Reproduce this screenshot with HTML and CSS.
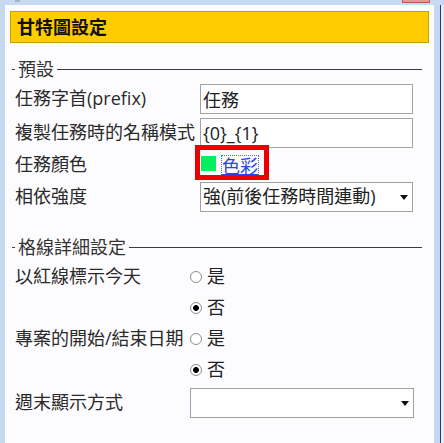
FILE: index.html
```html
<!DOCTYPE html>
<html lang="zh-Hant">
<head>
<meta charset="utf-8">
<title>甘特圖設定</title>
<link rel="stylesheet" href="styles.css">
</head>
<body>
<div class="topstrip">
  <span class="grip"></span>
  <span class="closebtn"></span>
</div>
<div class="main">
  <div class="panel">
    <div class="header">甘特圖設定</div>

    <div class="legend">預設</div>
    <div class="rows">
      <div class="row r1">
        <label class="lbl">任務字首(prefix)</label>
        <input class="txt" type="text" value="任務">
      </div>
      <div class="row">
        <label class="lbl">複製任務時的名稱模式</label>
        <input class="txt" type="text" value="{0}_{1}">
      </div>
      <div class="row r3">
        <label class="lbl">任務顏色</label>
        <div class="colorcell">
          <span class="swatch"></span>
          <a class="colorlink" href="#">色彩</a>
        </div>
      </div>
      <div class="row">
        <label class="lbl">相依強度</label>
        <select class="sel sel1">
          <option>強(前後任務時間連動)</option>
        </select>
      </div>
    </div>

    <div class="legend legend2">格線詳細設定</div>
    <div class="grid2">
      <div class="lbl">以紅線標示今天</div>
      <label class="radio"><input type="radio" name="today">是</label>
      <div></div>
      <label class="radio"><input type="radio" name="today" checked>否</label>
      <div class="lbl">專案的開始/結束日期</div>
      <label class="radio"><input type="radio" name="proj">是</label>
      <div></div>
      <label class="radio"><input type="radio" name="proj" checked>否</label>
      <div class="lbl last">週末顯示方式</div>
      <select class="sel sel2"><option></option></select>
    </div>
  </div>
  <div class="edge"></div>
  <div class="darkline"></div>
  <div class="outside"></div>
</div>
</body>
</html>
```

FILE: styles.css
```css
html, body {
  margin: 0;
  padding: 0;
}
body {
  width: 444px;
  height: 443px;
  overflow: hidden;
  background: #c6daf1;
  font-family: "Open Sans", "Noto Sans CJK TC", sans-serif;
  font-size: 18px;
  line-height: 1.2;
  color: #2a2a2a;
  display: flex;
  flex-direction: column;
}
.topstrip {
  height: 5px;
  display: flex;
  align-items: flex-start;
}
.grip {
  width: 5px;
  height: 2px;
  margin-left: 15px;
  background: #a9b4c2;
}
.closebtn {
  width: 28px;
  height: 3px;
  margin-left: 382px;
  background: #e39a93;
  border: 1px solid #b4554f;
  border-top: none;
  box-sizing: border-box;
}
.main {
  flex: 1;
  display: flex;
}
.panel {
  width: 429px;
  margin-left: 5px;
  background: #fcfbfd;
  padding: 6px 5px 0 5px;
  box-sizing: border-box;
}
.edge {
  width: 6px;
  background: #c4d8f0;
}
.darkline {
  width: 1px;
  background: #26415f;
}
.outside {
  flex: 1;
  background: #e6ecf3;
}
.header {
  height: 32px;
  box-sizing: border-box;
  border: 1px solid #c9a000;
  background: #ffcc00;
  font-family: "Noto Sans CJK TC", sans-serif;
  font-weight: bold;
  font-size: 18px;
  color: #111;
  padding-left: 6px;
  display: flex;
  align-items: center;
}
.legend {
  height: 20px;
  margin: 16px 7px 0 2px;
  display: flex;
  align-items: center;
  font-family: "Noto Sans CJK TC", sans-serif;
  color: #333;
}
.legend::before {
  content: "";
  width: 3px;
  height: 1px;
  background: #444;
  margin-right: 3px;
}
.legend::after {
  content: "";
  flex: 1;
  height: 1px;
  background: #3c3c3c;
  margin-left: 3px;
}
.legend2 {
  margin-top: 25px;
}
.rows {
  margin-top: 5px;
  padding-left: 5px;
}
.row {
  height: 30px;
  display: flex;
  align-items: center;
}
.r1 {
  margin-bottom: 4px;
}
.r3 {
  height: 34px;
}
.lbl {
  width: 185px;
  flex: none;
  white-space: nowrap;
  color: #2a2a2a;
}
.txt {
  width: 213px;
  height: 30px;
  box-sizing: border-box;
  border: 1px solid #a3a3a3;
  background: #fff;
  font: inherit;
  color: #222;
  padding: 0 2px;
  margin: 0;
}
.colorcell {
  position: relative;
  display: flex;
  align-items: center;
  height: 34px;
  padding-left: 1px;
}
.colorcell::after {
  content: "";
  position: absolute;
  left: -5px;
  top: -3px;
  width: 74px;
  height: 35px;
  box-sizing: border-box;
  border: 5px solid #ee0000;
}
.swatch {
  width: 15px;
  height: 15px;
  background: #00f060;
  margin-top: -3px;
}
.colorlink {
  margin-left: 5px;
  color: #2b44e0;
  text-decoration: underline;
  border: 1px dotted #5566cc;
  padding: 0 0 0 0;
  line-height: 18px;
  font-family: "Noto Sans CJK TC", sans-serif;
}
.sel {
  appearance: none;
  -webkit-appearance: none;
  height: 30px;
  box-sizing: border-box;
  border: 1px solid #a0a0a0;
  border-radius: 0;
  background: #fff url("data:image/svg+xml,%3Csvg xmlns='http://www.w3.org/2000/svg' width='8' height='5'%3E%3Cpath d='M0 0H8L4 5Z' fill='%23111'/%3E%3C/svg%3E") no-repeat right 4px center;
  font: inherit;
  color: #222;
  padding: 0 2px;
  margin: 0;
}
.sel1 {
  width: 213px;
}
.grid2 {
  margin-top: 4px;
  padding-left: 5px;
  display: grid;
  grid-template-columns: 175px 224px;
  grid-template-rows: 31px 31px 31px 31px 33px;
  align-items: center;
}
.grid2 .lbl {
  width: auto;
}
.grid2 .last {
  align-self: end;
  height: 30px;
  display: flex;
  align-items: center;
}
.sel2 {
  width: 224px;
  align-self: end;
}
.radio {
  display: flex;
  align-items: center;
  gap: 5px;
  color: #222;
}
.radio input {
  appearance: none;
  -webkit-appearance: none;
  width: 12px;
  height: 12px;
  margin: 0;
  border: 1px solid #8d8d8d;
  border-radius: 50%;
  background: #fff;
  box-sizing: border-box;
}
.radio input:checked {
  background: radial-gradient(circle, #000 0 2.6px, #fff 3.2px);
}
```
